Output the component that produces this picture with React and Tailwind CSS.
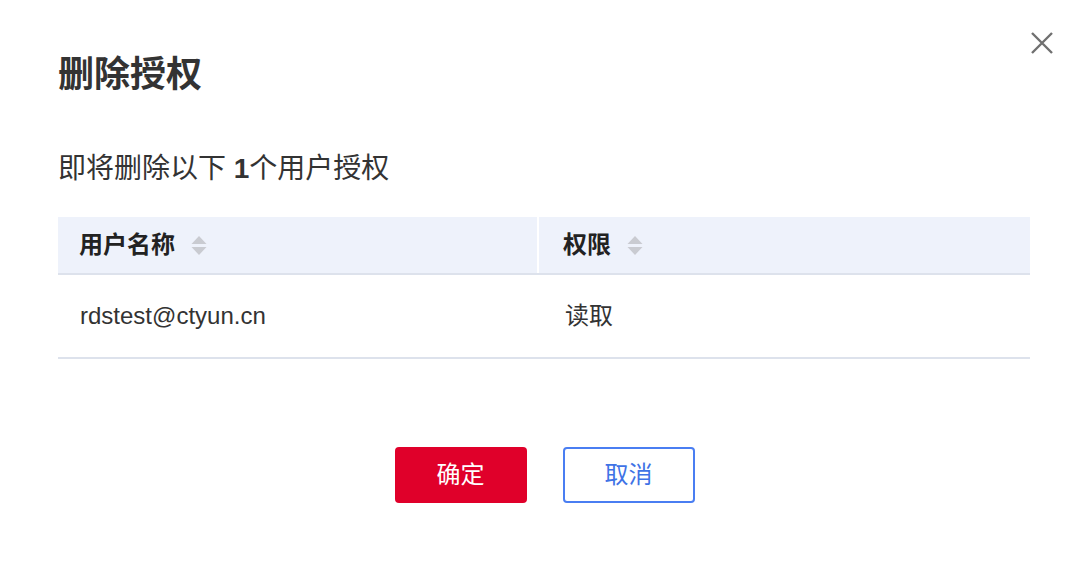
const font = { fontFamily: '"Liberation Sans", "Noto Sans CJK SC", sans-serif' }

function SortIcon() {
  return (
    <svg width="16" height="24" viewBox="0 0 16 24" className="ml-[16px] shrink-0">
      <path d="M8 3 L15.5 11 L0.5 11 Z" fill="#c9cbd1" />
      <path d="M0.5 14 L15.5 14 L8 22 Z" fill="#c9cbd1" />
    </svg>
  )
}

export default function App() {
  return (
    <div className="relative h-[561px] w-[1089px] bg-white text-[#333333]" style={font}>
      <button className="absolute left-[1030px] top-[31px] text-[#707070]">
        <svg width="24" height="24" viewBox="0 0 24 24" fill="none" stroke="currentColor" strokeWidth="2.4">
          <path d="M2 2 L22 22 M22 2 L2 22" />
        </svg>
      </button>

      <div className="px-[58px] pt-[50px]">
        <h1 className="text-[36px] font-bold leading-[50px] text-[#333333]">删除授权</h1>

        <p className="mt-[49px] text-[28px] leading-[40px]">
          即将删除以下 <span className="font-bold">1</span>个用户授权
        </p>

        <div className="mt-[28px] w-[972px]">
          <div className="flex h-[58px] border-b-2 border-[#dde2ec] bg-[#eef2fb]">
            <div className="flex w-[481px] items-center border-r-2 border-white pl-[21px] text-[24px] font-bold text-[#222222]">
              用户名称
              <SortIcon />
            </div>
            <div className="flex flex-1 items-center pl-[24px] text-[24px] font-bold text-[#222222]">
              权限
              <SortIcon />
            </div>
          </div>
          <div className="flex h-[84px] border-b-2 border-[#dde2ec] text-[24px]">
            <div className="flex w-[481px] items-center pl-[22px]">rdstest@ctyun.cn</div>
            <div className="flex flex-1 items-center pl-[26px]">读取</div>
          </div>
        </div>

        <div className="mt-[88px] flex justify-center gap-[36px]">
          <button className="flex h-[56px] w-[132px] items-center justify-center rounded-[4px] bg-[#e0002a] text-[24px] text-white">
            确定
          </button>
          <button className="flex h-[56px] w-[132px] items-center justify-center rounded-[4px] border-2 border-[#4a7ef2] bg-white text-[24px] text-[#3f73e6]">
            取消
          </button>
        </div>
      </div>
    </div>
  )
}
